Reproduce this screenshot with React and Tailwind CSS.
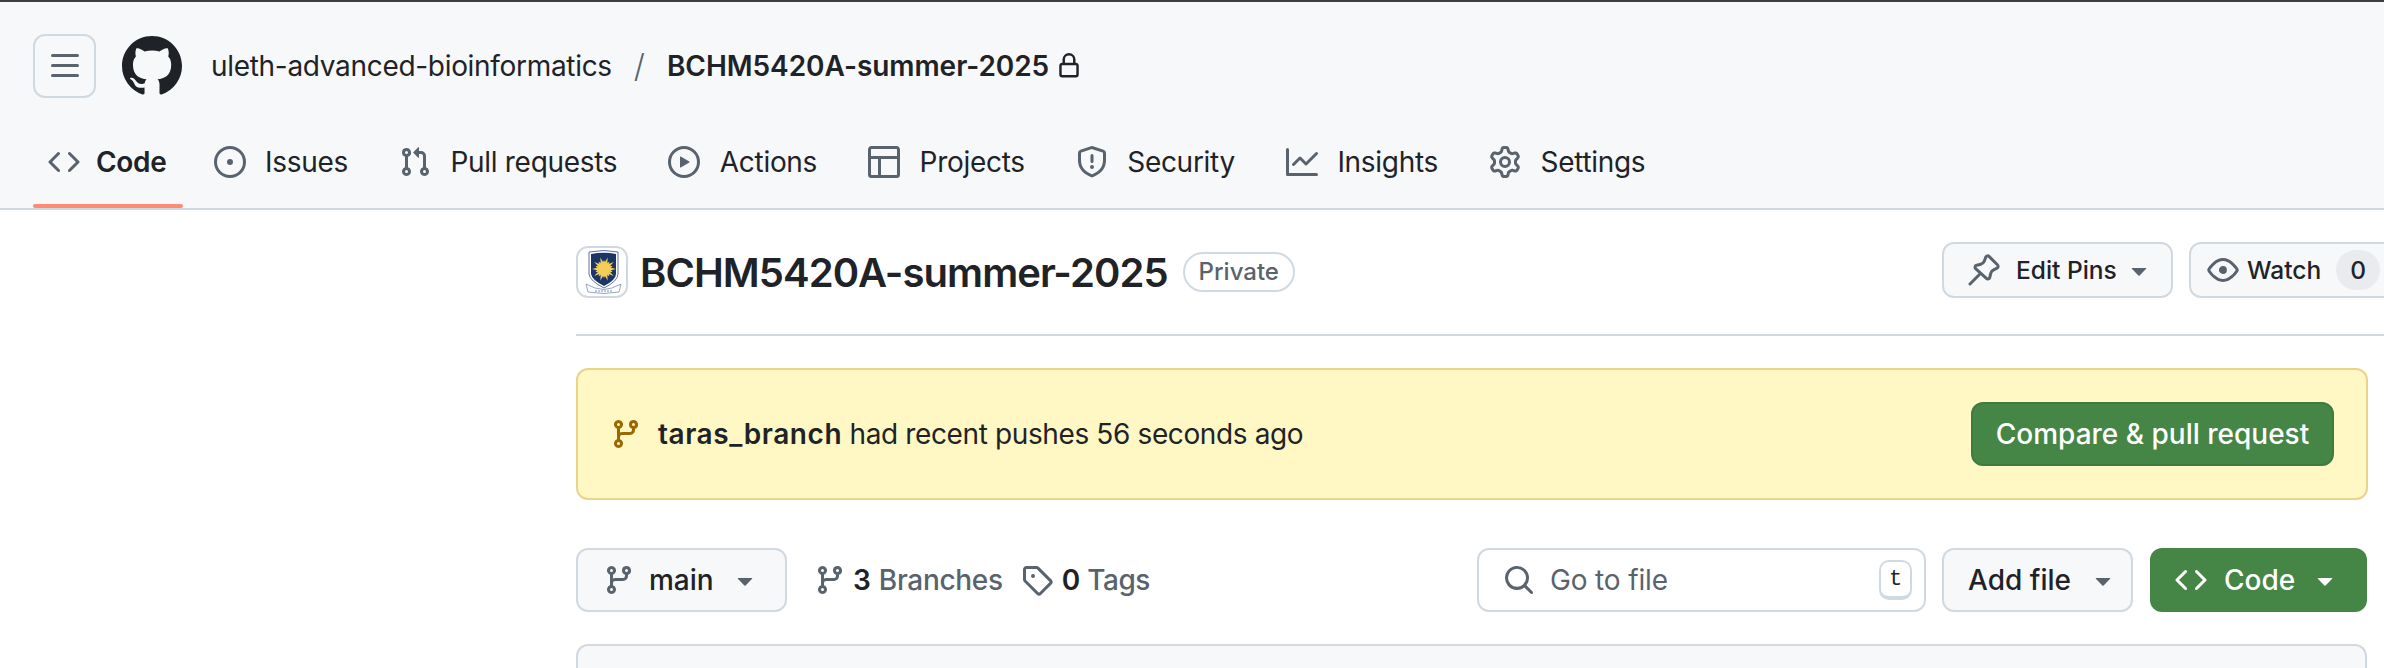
const paths = {
  code: "m11.28 3.22 4.25 4.25a.75.75 0 0 1 0 1.06l-4.25 4.25a.749.749 0 0 1-1.275-.326.749.749 0 0 1 .215-.734L13.94 8l-3.72-3.72a.749.749 0 0 1 .326-1.275.749.749 0 0 1 .734.215Zm-6.56 0a.751.751 0 0 1 1.042.018.751.751 0 0 1 .018 1.042L2.06 8l3.72 3.72a.749.749 0 0 1-.326 1.275.749.749 0 0 1-.734-.215L.47 8.53a.75.75 0 0 1 0-1.06Z",
  issue: "M8 9.5a1.5 1.5 0 1 0 0-3 1.5 1.5 0 0 0 0 3ZM8 0a8 8 0 1 1 0 16A8 8 0 0 1 8 0ZM1.5 8a6.5 6.5 0 1 0 13 0 6.5 6.5 0 0 0-13 0Z",
  pull: "M1.5 3.25a2.25 2.25 0 1 1 3 2.122v5.256a2.251 2.251 0 1 1-1.5 0V5.372A2.25 2.25 0 0 1 1.5 3.25Zm5.677-.177L9.573.677A.25.25 0 0 1 10 .854V2.5h1A2.5 2.5 0 0 1 13.5 5v5.628a2.251 2.251 0 1 1-1.5 0V5a1 1 0 0 0-1-1h-1v1.646a.25.25 0 0 1-.427.177L7.177 3.427a.25.25 0 0 1 0-.354ZM3.75 2.5a.75.75 0 1 0 0 1.5.75.75 0 0 0 0-1.5Zm0 9.5a.75.75 0 1 0 0 1.5.75.75 0 0 0 0-1.5Zm8.25.75a.75.75 0 1 0 1.5 0 .75.75 0 0 0-1.5 0Z",
  play: "M8 0a8 8 0 1 1 0 16A8 8 0 0 1 8 0ZM1.5 8a6.5 6.5 0 1 0 13 0 6.5 6.5 0 0 0-13 0Zm4.879-2.773 4.264 2.559a.25.25 0 0 1 0 .428l-4.264 2.559A.25.25 0 0 1 6 10.559V5.442a.25.25 0 0 1 .379-.215Z",
  table: "M0 1.75C0 .784.784 0 1.75 0h12.5C15.216 0 16 .784 16 1.75v12.5A1.75 1.75 0 0 1 14.25 16H1.75A1.75 1.75 0 0 1 0 14.25ZM6.5 6.5v8h7.75a.25.25 0 0 0 .25-.25V6.5Zm8-1.5V1.75a.25.25 0 0 0-.25-.25H1.75a.25.25 0 0 0-.25.25V5Zm-13 1.5v7.75c0 .138.112.25.25.25H5v-8Z",
  shield: "M7.467.133a1.748 1.748 0 0 1 1.066 0l5.25 1.68A1.75 1.75 0 0 1 15 3.48V7c0 1.566-.32 3.182-1.303 4.682-.983 1.498-2.585 2.813-5.032 3.855a1.697 1.697 0 0 1-1.33 0c-2.447-1.042-4.049-2.357-5.032-3.855C1.32 10.182 1 8.566 1 7V3.48a1.75 1.75 0 0 1 1.217-1.667Zm.61 1.429a.25.25 0 0 0-.153 0l-5.25 1.68a.25.25 0 0 0-.174.238V7c0 1.358.275 2.666 1.057 3.86.784 1.194 2.121 2.34 4.366 3.297a.196.196 0 0 0 .154 0c2.245-.956 3.582-2.104 4.366-3.298C13.225 9.666 13.5 8.36 13.5 7V3.48a.251.251 0 0 0-.174-.237l-5.25-1.68ZM8.75 4.75v3a.75.75 0 0 1-1.5 0v-3a.75.75 0 0 1 1.5 0ZM9 10.5a1 1 0 1 1-2 0 1 1 0 0 1 2 0Z",
  graph: "M1.5 1.75V13.5h13.75a.75.75 0 0 1 0 1.5H.75a.75.75 0 0 1-.75-.75V1.75a.75.75 0 0 1 1.5 0Zm14.28 2.53-5.25 5.25a.75.75 0 0 1-1.06 0L7 7.06 4.28 9.78a.751.751 0 0 1-1.042-.018.751.751 0 0 1-.018-1.042l3.25-3.25a.75.75 0 0 1 1.06 0L10 7.94l4.72-4.72a.751.751 0 0 1 1.042.018.751.751 0 0 1 .018 1.042Z",
  gear: "M8 0a8.2 8.2 0 0 1 .701.031C9.444.095 9.99.645 10.16 1.29l.288 1.107c.018.066.079.158.212.224.231.114.454.243.668.386.123.082.233.09.299.071l1.103-.303c.644-.176 1.392.021 1.82.63.27.385.506.792.704 1.218.315.675.111 1.422-.364 1.891l-.814.806c-.049.048-.098.147-.088.294.016.257.016.515 0 .772-.01.147.038.246.088.294l.814.806c.475.469.679 1.216.364 1.891a7.977 7.977 0 0 1-.704 1.217c-.428.61-1.176.807-1.82.63l-1.102-.302c-.067-.019-.177-.011-.3.071a5.909 5.909 0 0 1-.668.386c-.133.066-.194.158-.211.224l-.29 1.106c-.168.646-.715 1.196-1.458 1.26a8.006 8.006 0 0 1-1.402 0c-.743-.064-1.289-.614-1.458-1.26l-.289-1.106c-.018-.066-.079-.158-.212-.224a5.738 5.738 0 0 1-.668-.386c-.123-.082-.233-.09-.299-.071l-1.103.303c-.644.176-1.392-.021-1.82-.63a8.12 8.12 0 0 1-.704-1.218c-.315-.675-.111-1.422.363-1.891l.815-.806c.05-.048.098-.147.088-.294a6.214 6.214 0 0 1 0-.772c.01-.147-.038-.246-.088-.294l-.815-.806C.635 6.045.431 5.298.746 4.623a7.92 7.92 0 0 1 .704-1.217c.428-.61 1.176-.807 1.82-.63l1.102.302c.067.019.177.011.3-.071.214-.143.437-.272.668-.386.133-.066.194-.158.211-.224l.29-1.106C6.009.645 6.556.095 7.299.03 7.53.01 7.764 0 8 0Zm-.571 1.525c-.036.003-.108.036-.137.146l-.289 1.105c-.147.561-.549.967-.998 1.189-.173.086-.34.183-.5.29-.417.278-.97.423-1.529.27l-1.103-.303c-.109-.03-.175.016-.195.045-.22.312-.412.644-.573.99-.014.031-.021.11.059.19l.815.806c.411.406.562.957.53 1.456a4.709 4.709 0 0 0 0 .582c.032.499-.119 1.05-.53 1.456l-.815.806c-.081.08-.073.159-.059.19.162.346.353.677.573.989.02.03.085.076.195.046l1.102-.303c.56-.153 1.113-.008 1.53.27.161.107.328.204.501.29.447.222.85.629.997 1.189l.289 1.105c.029.109.101.143.137.146a6.6 6.6 0 0 0 1.142 0c.036-.003.108-.036.137-.146l.289-1.105c.147-.561.549-.967.998-1.189.173-.086.34-.183.5-.29.417-.278.97-.423 1.529-.27l1.103.303c.109.029.175-.016.195-.045.22-.313.411-.644.573-.99.014-.031.021-.11-.059-.19l-.815-.806c-.411-.406-.562-.957-.53-1.456a4.709 4.709 0 0 0 0-.582c-.032-.499.119-1.05.53-1.456l.815-.806c.081-.08.073-.159.059-.19a6.464 6.464 0 0 0-.573-.989c-.02-.03-.085-.076-.195-.046l-1.102.303c-.56.153-1.113.008-1.53-.27a4.44 4.44 0 0 0-.501-.29c-.447-.222-.85-.629-.997-1.189l-.289-1.105c-.029-.11-.101-.143-.137-.146a6.6 6.6 0 0 0-1.142 0ZM11 8a3 3 0 1 1-6 0 3 3 0 0 1 6 0ZM9.5 8a1.5 1.5 0 1 0-3.001.001A1.5 1.5 0 0 0 9.5 8Z",
  lock: "M4 4a4 4 0 0 1 8 0v2h.25c.966 0 1.75.784 1.75 1.75v5.5A1.75 1.75 0 0 1 12.25 15h-8.5A1.75 1.75 0 0 1 2 13.25v-5.5C2 6.784 2.784 6 3.75 6H4Zm8.25 3.5h-8.5a.25.25 0 0 0-.25.25v5.5c0 .138.112.25.25.25h8.5a.25.25 0 0 0 .25-.25v-5.5a.25.25 0 0 0-.25-.25ZM10.5 6V4a2.5 2.5 0 1 0-5 0v2Z",
  eye: "M8 2c1.981 0 3.671.992 4.933 2.078 1.27 1.091 2.187 2.345 2.637 3.023a1.62 1.62 0 0 1 0 1.798c-.45.678-1.367 1.932-2.637 3.023C11.67 13.008 9.981 14 8 14c-1.981 0-3.671-.992-4.933-2.078C1.797 10.83.88 9.576.43 8.898a1.62 1.62 0 0 1 0-1.798c.45-.677 1.367-1.931 2.637-3.022C4.33 2.992 6.019 2 8 2ZM1.679 7.932a.12.12 0 0 0 0 .136c.411.622 1.241 1.75 2.366 2.717C5.176 11.758 6.527 12.5 8 12.5c1.473 0 2.825-.742 3.955-1.715 1.124-.967 1.954-2.096 2.366-2.717a.12.12 0 0 0 0-.136c-.412-.621-1.242-1.75-2.366-2.717C10.824 4.242 9.473 3.5 8 3.5c-1.473 0-2.825.742-3.955 1.715-1.124.967-1.954 2.096-2.366 2.717ZM8 10a2 2 0 1 1-.001-3.999A2 2 0 0 1 8 10Z",
  branch: "M9.5 3.25a2.25 2.25 0 1 1 3 2.122V6A2.5 2.5 0 0 1 10 8.5H6a1 1 0 0 0-1 1v1.128a2.251 2.251 0 1 1-1.5 0V5.372a2.25 2.25 0 1 1 1.5 0v1.836A2.493 2.493 0 0 1 6 7h4a1 1 0 0 0 1-1v-.628A2.25 2.25 0 0 1 9.5 3.25Zm-6 0a.75.75 0 1 0 1.5 0 .75.75 0 0 0-1.5 0Zm8.25-.75a.75.75 0 1 0 0 1.5.75.75 0 0 0 0-1.5ZM4.25 12a.75.75 0 1 0 0 1.5.75.75 0 0 0 0-1.5Z",
  tag: "M1 7.775V2.75C1 1.784 1.784 1 2.75 1h5.025c.464 0 .91.184 1.238.513l6.25 6.25a1.75 1.75 0 0 1 0 2.474l-5.026 5.026a1.75 1.75 0 0 1-2.474 0l-6.25-6.25A1.752 1.752 0 0 1 1 7.775Zm1.5 0c0 .066.026.13.073.177l6.25 6.25a.25.25 0 0 0 .354 0l5.025-5.025a.25.25 0 0 0 0-.354l-6.25-6.25a.25.25 0 0 0-.177-.073H2.75a.25.25 0 0 0-.25.25ZM6 5a1 1 0 1 1 0 2 1 1 0 0 1 0-2Z",
  search: "M10.68 11.74a6 6 0 0 1-7.922-8.982 6 6 0 0 1 8.982 7.922l3.04 3.04a.749.749 0 0 1-.326 1.275.749.749 0 0 1-.734-.215ZM11.5 7a4.499 4.499 0 1 0-8.997 0A4.499 4.499 0 0 0 11.5 7Z",
  caret: "m4.427 7.427 3.396 3.396a.25.25 0 0 0 .354 0l3.396-3.396A.25.25 0 0 0 11.396 7H4.604a.25.25 0 0 0-.177.427Z",
  menu: "M1 2.75A.75.75 0 0 1 1.75 2h12.5a.75.75 0 0 1 0 1.5H1.75A.75.75 0 0 1 1 2.75Zm0 5A.75.75 0 0 1 1.75 7h12.5a.75.75 0 0 1 0 1.5H1.75A.75.75 0 0 1 1 7.75ZM1.75 12h12.5a.75.75 0 0 1 0 1.5H1.75a.75.75 0 0 1 0-1.5Z",
  mark: "M8 0c4.42 0 8 3.58 8 8a8.013 8.013 0 0 1-5.45 7.59c-.4.08-.55-.17-.55-.38 0-.27.01-1.13.01-2.2 0-.75-.25-1.23-.54-1.48 1.78-.2 3.65-.88 3.65-3.95 0-.88-.31-1.59-.82-2.15.08-.2.36-1.02-.08-2.12 0 0-.67-.22-2.2.82-.64-.18-1.32-.27-2-.27-.68 0-1.36.09-2 .27-1.53-1.03-2.2-.82-2.2-.82-.44 1.1-.16 1.92-.08 2.12-.51.56-.82 1.28-.82 2.15 0 3.06 1.86 3.75 3.64 3.95-.23.2-.44.55-.51 1.07-.46.21-1.61.55-2.33-.66-.15-.24-.6-.83-1.23-.82-.67.01-.27.38.01.53.34.19.73.9.82 1.13.16.45.68 1.31 2.69.94 0 .67.01 1.3.01 1.49 0 .21-.15.45-.55.38A7.995 7.995 0 0 1 0 8c0-4.42 3.58-8 8-8Z",
};

const tabs = [
  { label: "Code", icon: "code", active: true },
  { label: "Issues", icon: "issue" },
  { label: "Pull requests", icon: "pull" },
  { label: "Actions", icon: "play" },
  { label: "Projects", icon: "table" },
  { label: "Security", icon: "shield" },
  { label: "Insights", icon: "graph" },
  { label: "Settings", icon: "gear" },
];

function Octicon({ name, className = "" }) {
  return (
    <svg viewBox="0 0 16 16" className={`shrink-0 fill-current ${className}`}>
      <path d={paths[name]} />
    </svg>
  );
}

function PinIcon() {
  return (
    <svg
      viewBox="0 0 16 16"
      className="w-[32px] h-[32px] shrink-0 fill-none stroke-[#59636e] stroke-[1.5]"
      strokeLinecap="round"
      strokeLinejoin="round"
    >
      <path d="M5.6 10.4 L1 15" />
      <path d="M8.9 1.5a1 1 0 0 1 1.6-.3l4.3 4.3a1 1 0 0 1-.3 1.6l-1.7.8a2.6 2.6 0 0 0-1.4 1.7l-.5 2.1a1 1 0 0 1-1.7.5L3.8 7.3a1 1 0 0 1 .5-1.7l2.1-.5a2.6 2.6 0 0 0 1.7-1.4Z" />
    </svg>
  );
}

function Crest() {
  const rays = [];
  for (let i = 0; i < 20; i++) {
    rays.push(
      <path
        key={i}
        d={i % 2 ? "M24.6 15 L26 9 L27.4 15 Z" : "M24.6 15 L26 12 L27.4 15 Z"}
        fill="#f4cf58"
        transform={`rotate(${i * 18} 26 21)`}
      />,
    );
  }
  return (
    <div className="w-[52px] h-[52px] rounded-[12px] border-2 border-[#d1d9e0] bg-white shrink-0 overflow-hidden">
      <svg viewBox="0 0 48 48" className="w-full h-full">
        <path d="M11 4 Q26 1 40 4 V26 Q40 33 26 40 Q12 33 11 26 Z" fill="#fff" stroke="#5b73a6" strokeWidth="1" />
        <path d="M13 6 Q26 3.5 38 6 V26 Q38 32 26 38 Q14 32 13 26 Z" fill="#1c3568" />
        {rays}
        <circle cx="26" cy="21" r="6.5" fill="#f4cf58" />
        <path d="M8 36 L17 40 Q26 43 34 40 L43 36 L41 44 Q26 47 10 44 Z" fill="#fff" stroke="#7d8db5" strokeWidth="0.8" />
        <path d="M17 43 H34" stroke="#7d8db5" strokeWidth="1" strokeDasharray="2 1" />
      </svg>
    </div>
  );
}

function App() {
  return (
    <div className="w-[2384px] h-[668px] overflow-hidden bg-white text-[#1f2328] font-['Inter','Liberation_Sans',sans-serif] text-[28px]">
      <header className="bg-[#f6f8fa] border-t-2 border-t-[#3d3f42] border-b-2 border-b-[#d1d9e0] h-[210px] pl-[33px]">
        <div className="flex items-center h-[64px] mt-[32px]">
          <div className="w-[63px] h-[64px] rounded-[12px] border-2 border-[#d1d9e0] flex items-center justify-center text-[#59636e]">
            <Octicon name="menu" className="w-[32px] h-[32px]" />
          </div>
          <Octicon name="mark" className="ml-[26px] w-[60px] h-[60px] text-[#1f2328]" />
          <span className="ml-[29px] tracking-[-0.31px]">uleth-advanced-bioinformatics</span>
          <span className="ml-[22px] text-[#59636e] text-[32px] font-light">/</span>
          <span className="ml-[22px] font-semibold tracking-[-0.05px]">BCHM5420A-summer-2025</span>
          <Octicon name="lock" className="ml-[7px] w-[26px] h-[26px] text-[#1f2328]" />
        </div>
        <nav className="flex gap-[20px] mt-[32px] h-[78px]">
          {tabs.map((tab) => (
            <div
              key={tab.label}
              className={`relative flex items-center pl-[15px] pr-[16px] h-full pb-[14px] tracking-[-0.3px] ${tab.active ? "font-semibold gap-[16px] mr-[-4px]" : "gap-[19.5px]"}`}
            >
              <Octicon name={tab.icon} className="w-[32px] h-[32px] text-[#59636e]" />
              <span>{tab.label}</span>
              {tab.active && (
                <span className="absolute left-0 right-0 bottom-0 h-[4px] rounded-[3px] bg-[#fd8c73]" />
              )}
            </div>
          ))}
        </nav>
      </header>

      <main className="pl-[576px] pr-[16px]">
        <div className="flex items-center h-[126px] border-b-2 border-[#d1d9e0] -mr-[16px] pb-[4px]">
          <div className="flex items-center w-[1366px] shrink-0 pt-[3px]">
            <Crest />
            <h1 className="ml-[12px] mt-[2px] text-[40px] font-semibold tracking-[-0.95px]">BCHM5420A-summer-2025</h1>
            <span className="ml-[15px] h-[40px] px-[14px] flex items-center rounded-full border-2 border-[#d1d9e0] text-[24px] font-medium text-[#59636e]">
              Private
            </span>
          </div>
          <div className="flex items-center gap-4 shrink-0 text-[24.5px] font-medium">
            <div className="h-[56px] w-[231px] shrink-0 rounded-[12px] border-2 border-[#d1d9e0] bg-[#f6f8fa] flex items-center pl-[24px]">
              <PinIcon />
              <span className="ml-[16px]">Edit Pins</span>
              <Octicon name="caret" className="ml-[6px] w-[32px] h-[32px] text-[#59636e]" />
            </div>
            <div className="h-[56px] w-[260px] shrink-0 rounded-[12px] border-2 border-[#d1d9e0] bg-[#f6f8fa] flex items-center pl-[16px]">
              <Octicon name="eye" className="w-[32px] h-[32px] text-[#59636e]" />
              <span className="ml-[8px]">Watch</span>
              <span className="ml-[15px] w-[44px] h-[40px] rounded-full bg-[#e9ebef] flex items-center justify-center">0</span>
            </div>
          </div>
        </div>

        <div className="mt-[32px] h-[132px] rounded-[12px] border-2 border-[#e8d58b] bg-[#fff8c5] flex items-center pl-[32px] pr-[32px]">
          <Octicon name="branch" className="w-[32px] h-[32px] text-[#9a6700]" />
          <p className="ml-[16px] tracking-[-0.38px]">
            <strong className="font-semibold tracking-[0.55px]">taras_branch</strong> had recent pushes 56 seconds ago
          </p>
          <div className="ml-auto h-[64px] w-[363px] rounded-[12px] bg-[#458545] border-2 border-[#3f7a40] text-white font-medium flex items-center justify-center">
            Compare &amp; pull request
          </div>
        </div>

        <div className="flex items-center mt-[48px] h-[64px] mr-[1px]">
          <div className="h-full w-[211px] rounded-[12px] border-2 border-[#d1d9e0] bg-[#f6f8fa] flex items-center pl-[25px] font-medium">
            <Octicon name="branch" className="w-[32px] h-[32px] text-[#59636e]" />
            <span className="ml-[14px]">main</span>
            <Octicon name="caret" className="ml-[15px] w-[32px] h-[32px] text-[#59636e]" />
          </div>
          <div className="ml-[27px] flex items-center">
            <Octicon name="branch" className="w-[32px] h-[32px] text-[#59636e]" />
            <span className="ml-[7px] font-semibold">3</span>
            <span className="ml-[8px] text-[#59636e] font-medium tracking-[-0.3px]">Branches</span>
          </div>
          <div className="ml-[18px] flex items-center">
            <Octicon name="tag" className="w-[32px] h-[32px] text-[#59636e]" />
            <span className="ml-[9px] font-semibold">0</span>
            <span className="ml-[7px] text-[#59636e] font-medium tracking-[-0.5px]">Tags</span>
          </div>
          <div className="ml-auto h-full w-[449px] rounded-[12px] border-2 border-[#d1d9e0] bg-white flex items-center pl-[24px] pr-[12px] text-[#59636e]">
            <Octicon name="search" className="w-[32px] h-[32px]" />
            <span className="ml-[15px] tracking-[-0.15px]">Go to file</span>
            <kbd className="ml-auto w-[33px] h-[40px] rounded-[10px] border-2 border-b-4 border-[#d1d9e0] flex items-center justify-center text-[#1f2328] text-[22px] font-['Liberation_Mono',monospace]">
              t
            </kbd>
          </div>
          <div className="ml-[16px] h-full w-[191px] rounded-[12px] border-2 border-[#d1d9e0] bg-[#f6f8fa] flex items-center pl-[24px] font-medium">
            <span>Add file</span>
            <Octicon name="caret" className="ml-[16px] w-[32px] h-[32px] text-[#59636e]" />
          </div>
          <div className="ml-[17px] h-full w-[217px] rounded-[12px] bg-[#458545] text-white flex items-center pl-[25px] font-medium">
            <Octicon name="code" className="w-[32px] h-[32px]" />
            <span className="ml-[17px]">Code</span>
            <Octicon name="caret" className="ml-[14px] w-[32px] h-[32px]" />
          </div>
        </div>

        <div className="mt-[32px] h-[60px] mr-[1px] rounded-t-[12px] border-2 border-b-0 border-[#d1d9e0] bg-[#f6f8fa]" />
      </main>
    </div>
  );
}

export default App;
